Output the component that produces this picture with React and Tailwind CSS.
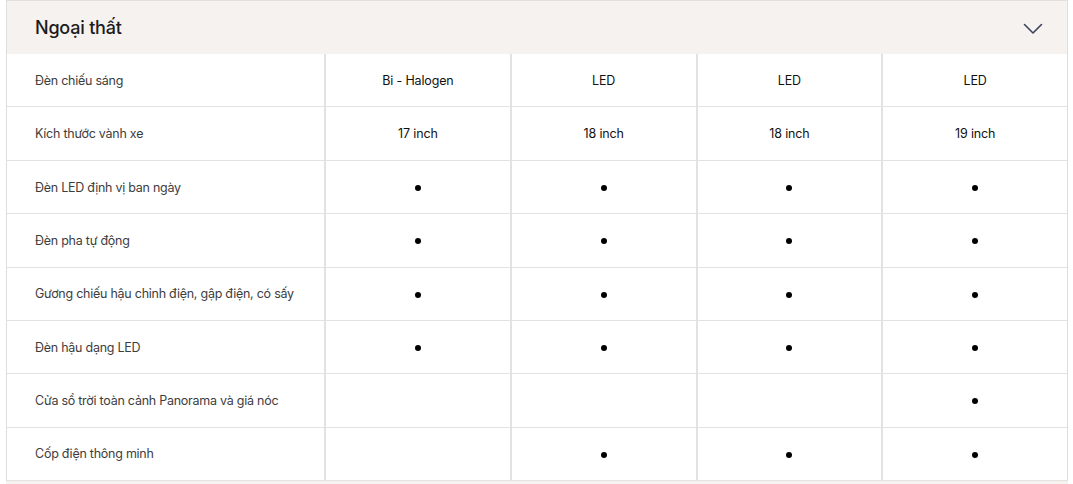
import React from "react";

const rows = [
  ["Đèn chiếu sáng", ["Bi - Halogen", "LED", "LED", "LED"]],
  ["Kích thước vành xe", ["17 inch", "18 inch", "18 inch", "19 inch"]],
  ["Đèn LED định vị ban ngày", [1, 1, 1, 1]],
  ["Đèn pha tự động", [1, 1, 1, 1]],
  ["Gương chiếu hậu chỉnh điện, gập điện, có sấy", [1, 1, 1, 1]],
  ["Đèn hậu dạng LED", [1, 1, 1, 1]],
  ["Cửa sổ trời toàn cảnh Panorama và giá nóc", [0, 0, 0, 1]],
  ["Cốp điện thông minh", [0, 1, 1, 1]],
];

function Cell({ v }) {
  if (v === 1) return <div className="w-[6px] h-[6px] rounded-full bg-black" />;
  if (v === 0) return null;
  return <span className="text-[12.5px] tracking-[-0.15px] text-[#111]">{v}</span>;
}

export default function App() {
  return (
    <div className="w-[1073px] h-[484px] bg-white overflow-hidden" style={{ fontFamily: "Inter, 'Noto Sans', sans-serif" }}>
      <div className="ml-[6px] w-[1062px] border-x border-[#dedede]">
        <div className="h-[54px] bg-[#f6f2f0] border-t border-[#e6e0dd] flex items-center justify-between pl-[28px] pr-[24px]">
          <span className="text-[18px] font-medium text-[#1c1c1c] tracking-[-0.2px]">Ngoại thất</span>
          <svg width="20" height="12" viewBox="0 0 20 12" fill="none" className="mt-[3px]">
            <path d="M1.5 1.5 L10 10 L18.5 1.5" stroke="#3b4358" strokeWidth="1.6" strokeLinecap="round" strokeLinejoin="round" />
          </svg>
        </div>
        {rows.map(([label, vals], i) => (
          <div key={i} className="grid grid-cols-[317px_1fr_1fr_1fr_1fr] h-[53.375px] border-b border-[#e2e2e2]">
            <div className="flex items-center pl-[28px] pt-[2px] text-[12.5px] tracking-[-0.25px] text-[#3d3d3d]">{label}</div>
            {vals.map((v, j) => (
              <div key={j} className="flex items-center justify-center pt-[2px] border-l-2 border-[#e2e2e2]">
                <Cell v={v} />
              </div>
            ))}
          </div>
        ))}
      </div>
      <div className="ml-[6px] w-[1062px] h-[4px] bg-[#f6f2f0]" />
    </div>
  );
}
